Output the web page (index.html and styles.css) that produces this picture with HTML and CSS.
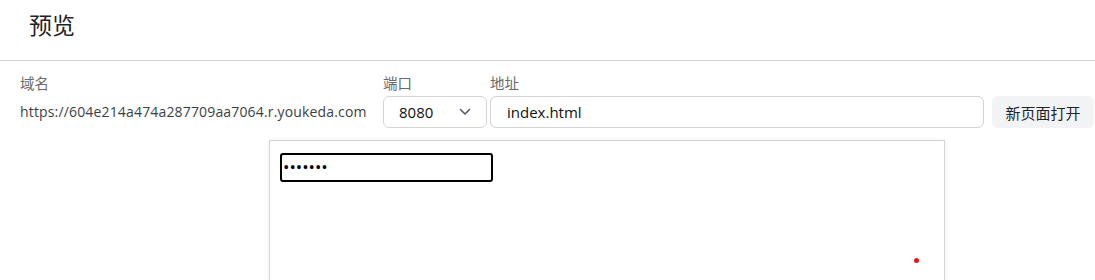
FILE: index.html
```html
<!DOCTYPE html>
<html lang="zh">
<head>
<meta charset="utf-8">
<link rel="stylesheet" href="styles.css">
</head>
<body>
<header class="header">
  <h1 class="title">预览</h1>
</header>
<section class="bar">
  <div class="field field-domain">
    <label class="label">域名</label>
    <div class="domain">https://604e214a474a287709aa7064.r.youkeda.com</div>
  </div>
  <div class="field field-port">
    <label class="label">端口</label>
    <div class="select">
      <span>8080</span>
      <svg class="chev" width="12" height="8" viewBox="0 0 12 8"><path d="M1.5 1.5 L6 6 L10.5 1.5" fill="none" stroke="#4b5563" stroke-width="1.5" stroke-linecap="round" stroke-linejoin="round"/></svg>
    </div>
  </div>
  <div class="field field-addr">
    <label class="label">地址</label>
    <div class="input">index.html</div>
  </div>
  <button class="btn">新页面打开</button>
</section>
<div class="frame">
  <div class="pwd">•••••••</div>
  <span class="dot"></span>
</div>
</body>
</html>
```

FILE: styles.css
```css
html, body {
  margin: 0;
  padding: 0;
  background: #fff;
  overflow: hidden;
}
body {
  font-family: "Open Sans", "Noto Sans CJK SC", sans-serif;
  color: #1f2328;
  font-size: 14px;
}
.header {
  height: 61px;
  border-bottom: 1px solid #d4d4d8;
  box-sizing: border-box;
  padding: 9px 0 0 29px;
}
.title {
  margin: 0;
  font-size: 23px;
  font-weight: 400;
  line-height: 30px;
  font-family: "Noto Sans CJK SC", sans-serif;
  color: #1f2328;
}
.bar {
  display: flex;
  align-items: flex-end;
  padding: 12px 0 0 20px;
}
.field {
  display: flex;
  flex-direction: column;
}
.label {
  font-size: 14.5px;
  color: #6b6b6b;
  line-height: 20px;
  height: 20px;
  margin-bottom: 3px;
  font-family: "Noto Sans CJK SC", sans-serif;
}
.field-domain { width: 363px; }
.domain {
  height: 32px;
  line-height: 32px;
  color: #3b3f45;
  font-size: 14px;
  white-space: nowrap;
  letter-spacing: 0.16px;
}
.field-port { width: 104px; margin-right: 3px; }
.select {
  height: 32px;
  box-sizing: border-box;
  border: 1px solid #d4d4d8;
  border-radius: 6px;
  display: flex;
  align-items: center;
  justify-content: space-between;
  padding: 0 15px 0 15px;
  font-size: 15px;
  color: #111;
}
.field-addr { width: 494px; margin-right: 8px; }
.input {
  height: 32px;
  box-sizing: border-box;
  border: 1px solid #d4d4d8;
  border-radius: 6px;
  padding: 0 16px;
  line-height: 30px;
  font-size: 15px;
  color: #111;
}
.btn {
  height: 32px;
  width: 102px;
  border: none;
  border-radius: 6px;
  background: #f2f3f5;
  font-family: "Noto Sans CJK SC", sans-serif;
  font-size: 15px;
  color: #1f2328;
  padding: 0;
}
.frame {
  position: relative;
  margin: 12px 0 0 269px;
  width: 676px;
  height: 200px;
  box-sizing: border-box;
  border: 1px solid #d4d4d8;
  box-shadow: 0 0 6px rgba(0,0,0,0.06);
  padding: 12px 10px;
}
.pwd {
  width: 213px;
  height: 29px;
  box-sizing: border-box;
  border: 2px solid #000;
  border-radius: 3px;
  font-size: 17px;
  line-height: 24px;
  padding-left: 1px;
  letter-spacing: 0px;
  color: #000;
}
.dot {
  position: absolute;
  left: 644px;
  top: 117px;
  width: 5px;
  height: 5px;
  border-radius: 50%;
  background: #e8141b;
}
```
